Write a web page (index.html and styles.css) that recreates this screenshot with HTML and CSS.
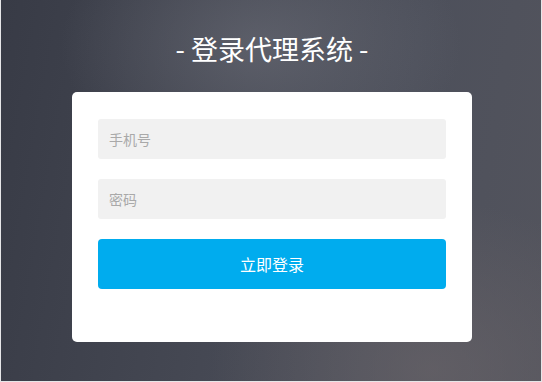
FILE: index.html
```html
<!DOCTYPE html>
<html lang="zh-CN">
<head>
<meta charset="utf-8">
<title>登录代理系统</title>
<link rel="stylesheet" href="styles.css">
</head>
<body>
<div class="page">
  <h1 class="title">- 登录代理系统 -</h1>
  <form class="card">
    <input class="field" type="text" placeholder="手机号">
    <input class="field" type="password" placeholder="密码">
    <button class="btn" type="button">立即登录</button>
  </form>
</div>
</body>
</html>
```

FILE: styles.css
```css
* { box-sizing: border-box; }
html, body { margin: 0; padding: 0; height: 100%; }
body {
  font-family: "Noto Sans CJK SC", "Noto Sans", sans-serif;
}
.page {
  height: 382px;
  border-left: 1px solid #e6e6e8;
  border-right: 1px solid #e6e6e8;
  border-bottom: 1px solid #e6e6e8;
  background:
    radial-gradient(ellipse 200px 130px at 260px 45px, rgba(112,114,124,0.55), rgba(112,114,124,0) 100%),
    radial-gradient(ellipse 220px 170px at 430px 370px, rgba(108,102,106,0.6), rgba(108,102,106,0) 100%),
    linear-gradient(100deg, #383b46 0%, #444752 40%, #4d505b 70%, #53545d 100%);
  display: flex;
  flex-direction: column;
  align-items: center;
  padding-top: 29px;
  padding-left: 2px;
}
.title {
  margin: 0;
  color: #ffffff;
  font-weight: 400;
  font-size: 27px;
  line-height: 40px;
  height: 40px;
}
.card {
  margin-top: 23px;
  width: 400px;
  height: 250px;
  background: #ffffff;
  border-radius: 5px;
  padding: 27px 26px 0;
  display: flex;
  flex-direction: column;
  gap: 20px;
}
.field {
  height: 40px;
  width: 100%;
  border: none;
  outline: none;
  background: #f1f1f1;
  border-radius: 3px;
  padding: 0 11px;
  font-family: inherit;
  font-size: 14px;
  color: #333;
}
.field::placeholder { color: #a9a9a9; }
.btn {
  height: 50px;
  width: 100%;
  border: none;
  border-radius: 4px;
  background: #00acee;
  color: #ffffff;
  font-family: inherit;
  font-size: 16px;
  cursor: pointer;
}
```
